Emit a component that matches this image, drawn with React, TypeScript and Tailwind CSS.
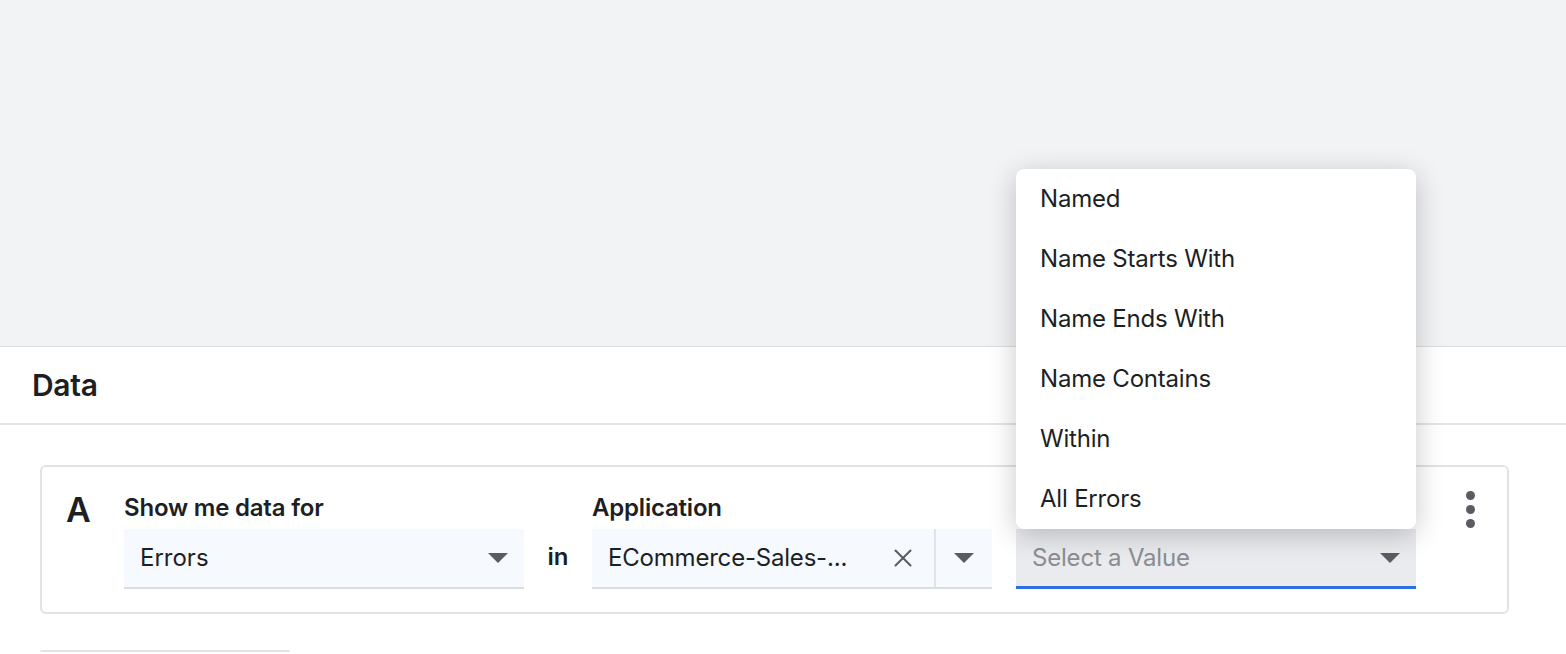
import { X } from 'lucide-react'

const font = { fontFamily: 'Inter, "Noto Sans", sans-serif' }

function Caret() {
  return (
    <svg width="20" height="12" viewBox="0 0 20 12" className="shrink-0">
      <path d="M0 1 L20 1 L10 11 Z" fill="#595c63" />
    </svg>
  )
}

const OPTIONS = ['Named', 'Name Starts With', 'Name Ends With', 'Name Contains', 'Within', 'All Errors']

export default function App() {
  return (
    <div className="w-[1566px] h-[654px] overflow-hidden bg-white text-[#1d1f24]" style={font}>
      <div className="h-[347px] bg-[#f2f3f5] border-b border-[#dcdde0]" />
      <div className="h-[78px] flex items-center px-8 border-b-2 border-[#e2e3e6]">
        <span className="text-[30px] font-semibold tracking-[-0.3px]">Data</span>
      </div>
      <div className="pl-10 pr-[57px] pt-10">
        <div className="h-[149px] rounded-md border-2 border-[#e2e3e6] flex items-start pl-6 pr-8 pt-[20px]">
          <span className="text-[34px] font-semibold leading-none mt-[6px] w-[58px]">A</span>
          <div className="flex flex-col w-[400px]">
            <span className="text-[24px] font-semibold leading-[42px] tracking-[-0.2px]">Show me data for</span>
            <div className="h-[60px] bg-[#f6f9fd] border-b-2 border-[#dcdde0] flex items-center justify-between pl-4 pr-4 text-[24px]">
              <span>Errors</span>
              <Caret />
            </div>
          </div>
          <span className="text-[24px] font-semibold w-[68px] text-center mt-[52px]">in</span>
          <div className="flex flex-col w-[400px]">
            <span className="text-[24px] font-semibold leading-[42px] tracking-[-0.2px]">Application</span>
            <div className="h-[60px] bg-[#f6f9fd] border-b-2 border-[#dcdde0] flex items-center text-[24px]">
              <span className="flex-1 pl-4 tracking-[-0.2px]">ECommerce-Sales-...</span>
              <X size={30} strokeWidth={1.6} className="text-[#595c63] mr-4" />
              <div className="h-full w-[2px] bg-[#e2e3e6]" />
              <div className="w-[56px] flex justify-center"><Caret /></div>
            </div>
          </div>
          <div className="relative flex flex-col w-[400px] ml-[24px] pt-[42px]">
            <div className="absolute bottom-[60px] left-0 w-[400px] bg-white rounded-lg shadow-[0_6px_28px_rgba(0,0,0,0.22)] z-10">
              {OPTIONS.map((o) => (
                <div key={o} className="h-[60px] flex items-center px-6 text-[24px] tracking-[-0.2px]">{o}</div>
              ))}
            </div>
            <div className="h-[60px] bg-[#e9ebee] border-b-[3px] border-[#2b6fe0] flex items-center justify-between pl-4 pr-4 text-[24px]">
              <span className="text-[#8b8d92] tracking-[-0.2px]">Select a Value</span>
              <Caret />
            </div>
          </div>
          <div className="flex-1 flex justify-end mt-[4px]">
            <div className="flex flex-col gap-[5px] items-center">
              <div className="w-[9px] h-[9px] rounded-full bg-[#595c63]" />
              <div className="w-[9px] h-[9px] rounded-full bg-[#595c63]" />
              <div className="w-[9px] h-[9px] rounded-full bg-[#595c63]" />
            </div>
          </div>
        </div>
        <div className="mt-[36px] w-[250px] h-[4px] border-t-2 border-[#e2e3e6] rounded" />
      </div>
    </div>
  )
}
